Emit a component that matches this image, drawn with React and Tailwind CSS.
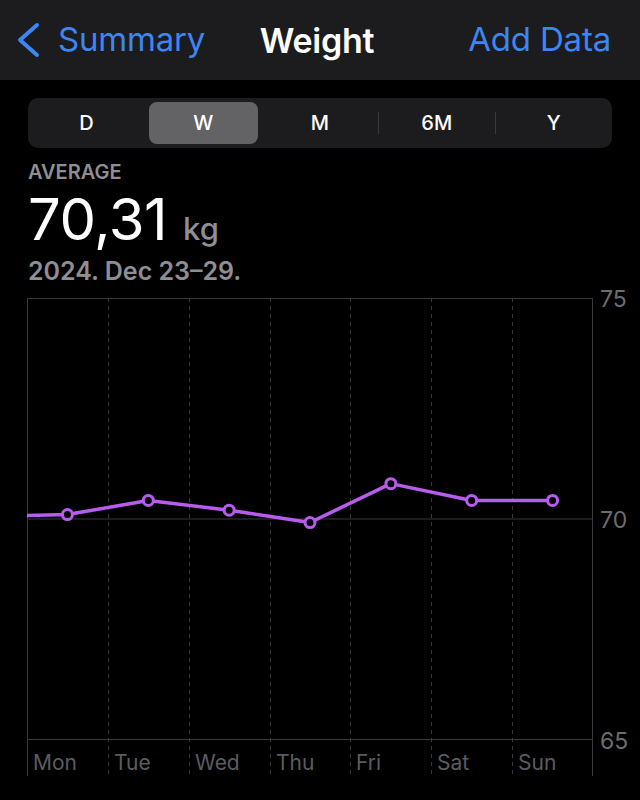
import React from 'react';

const days = ['Mon', 'Tue', 'Wed', 'Thu', 'Fri', 'Sat', 'Sun'];
const weights = [70.1, 70.42, 70.2, 69.92, 70.8, 70.42, 70.42];
const ranges = ['D', 'W', 'M', '6M', 'Y'];

// chart geometry (px inside the svg)
const plotW = 566;
const plotH = 442;
const colW = plotW / 7;
const yFor = (v) => ((75 - v) / 10) * plotH;

const WeightChart = () => {
  const pts = weights.map((w, i) => [colW / 2 + colW * i, yFor(w)]);
  const path = `M0 ${yFor(70.08)} ` + pts.map(([x, y]) => `L${x} ${y}`).join(' ');

  return (
    <svg width="613" height="478" className="overflow-visible block" style={{ fontFamily: 'Inter, "Liberation Sans", sans-serif' }}>
      {/* horizontal grid */}
      <line x1="0" y1="0.5" x2={plotW} y2="0.5" stroke="#3a3a3c" strokeWidth="1" />
      <line x1="0" y1={plotH / 2} x2={plotW} y2={plotH / 2} stroke="#3a3a3c" strokeWidth="1" />
      <line x1="0" y1={plotH - 0.5} x2={plotW} y2={plotH - 0.5} stroke="#3a3a3c" strokeWidth="1" />
      {/* vertical grid */}
      <line x1="0.5" y1="0" x2="0.5" y2="478" stroke="#3a3a3c" strokeWidth="1" />
      <line x1={plotW - 0.5} y1="0" x2={plotW - 0.5} y2="478" stroke="#3a3a3c" strokeWidth="1" />
      {[1, 2, 3, 4, 5, 6].map((k) => (
        <line
          key={k}
          x1={Math.round(colW * k) + 0.5}
          y1="0"
          x2={Math.round(colW * k) + 0.5}
          y2="478"
          stroke="#3a3a3c"
          strokeWidth="1"
          strokeDasharray="4 4"
        />
      ))}

      {/* y axis labels */}
      <text x="573" y="9" fontSize="23" fill="#6c6c70">75</text>
      <text x="573" y={plotH / 2 + 9} fontSize="23" fill="#6c6c70">70</text>
      <text x="573" y={plotH + 9} fontSize="23" fill="#6c6c70">65</text>

      {/* day labels */}
      {days.map((d, i) => (
        <text key={d} x={Math.round(colW * i) + 6} y="472" fontSize="21" fill="#5c5c60">
          {d}
        </text>
      ))}

      {/* weight line */}
      <path d={path} fill="none" stroke="#b85cf0" strokeWidth="3.5" strokeLinejoin="round" />
      {pts.map(([x, y], i) => (
        <circle key={i} cx={x} cy={y} r="5" fill="#000" stroke="#b85cf0" strokeWidth="3" />
      ))}
    </svg>
  );
};

const App = () => {
  return (
    <div className="w-[640px] h-[800px] bg-black overflow-hidden" style={{ fontFamily: 'Inter, "Liberation Sans", sans-serif' }}>
      {/* Nav bar */}
      <div className="h-[80px] bg-[#1c1c1e] flex items-center justify-between pl-[15px] pr-[29px]">
        <div className="flex items-center gap-[15px] w-[205px] text-[#3d86f4]">
          <svg width="28" height="38" viewBox="0 0 28 38">
            <path d="M22 4 L5 19 L22 34" fill="none" stroke="currentColor" strokeWidth="4" strokeLinecap="round" strokeLinejoin="round" />
          </svg>
          <span className="text-[33px] tracking-[-0.2px]">Summary</span>
        </div>
        <div className="text-white text-[34px] font-semibold tracking-[-0.3px] ml-[8px]">Weight</div>
        <div className="w-[205px] text-right text-[#3d86f4] text-[33px] tracking-[-0.2px]">Add Data</div>
      </div>

      {/* Range picker */}
      <div className="mt-[18px] mx-[28px] h-[50px] rounded-[10px] bg-[#1c1c1e] grid grid-cols-5 items-center">
        {ranges.map((r, i) => (
          <div key={r} className="relative h-full flex items-center justify-center">
            {r === 'W' ? (
              <div className="w-[109px] h-[42px] rounded-[8px] bg-[#636366] flex items-center justify-center text-white text-[20px] font-medium">
                {r}
              </div>
            ) : (
              <>
                {i > 2 && <div className="absolute left-0 top-[14px] h-[22px] w-px bg-[#3a3a3c]" />}
                <span className="text-white text-[20px] font-medium">{r}</span>
              </>
            )}
          </div>
        ))}
      </div>

      {/* Summary numbers */}
      <div className="px-[28px] mt-[10px]">
        <div className="text-[#8e8e93] text-[20px] font-semibold leading-[28px]">AVERAGE</div>
        <div className="flex items-baseline gap-[16px] leading-[60px] mt-[3px]">
          <span className="text-white text-[58px] font-normal tracking-[-0.5px]">70,31</span>
          <span className="text-[#8e8e93] text-[31px] font-medium">kg</span>
        </div>
        <div className="text-[#8e8e93] text-[25px] font-semibold leading-[28px] mt-[-2px]">2024. Dec 23–29.</div>
      </div>

      {/* Chart */}
      <div className="pl-[27px] mt-[13px]">
        <WeightChart />
      </div>
    </div>
  );
};

export default App;
